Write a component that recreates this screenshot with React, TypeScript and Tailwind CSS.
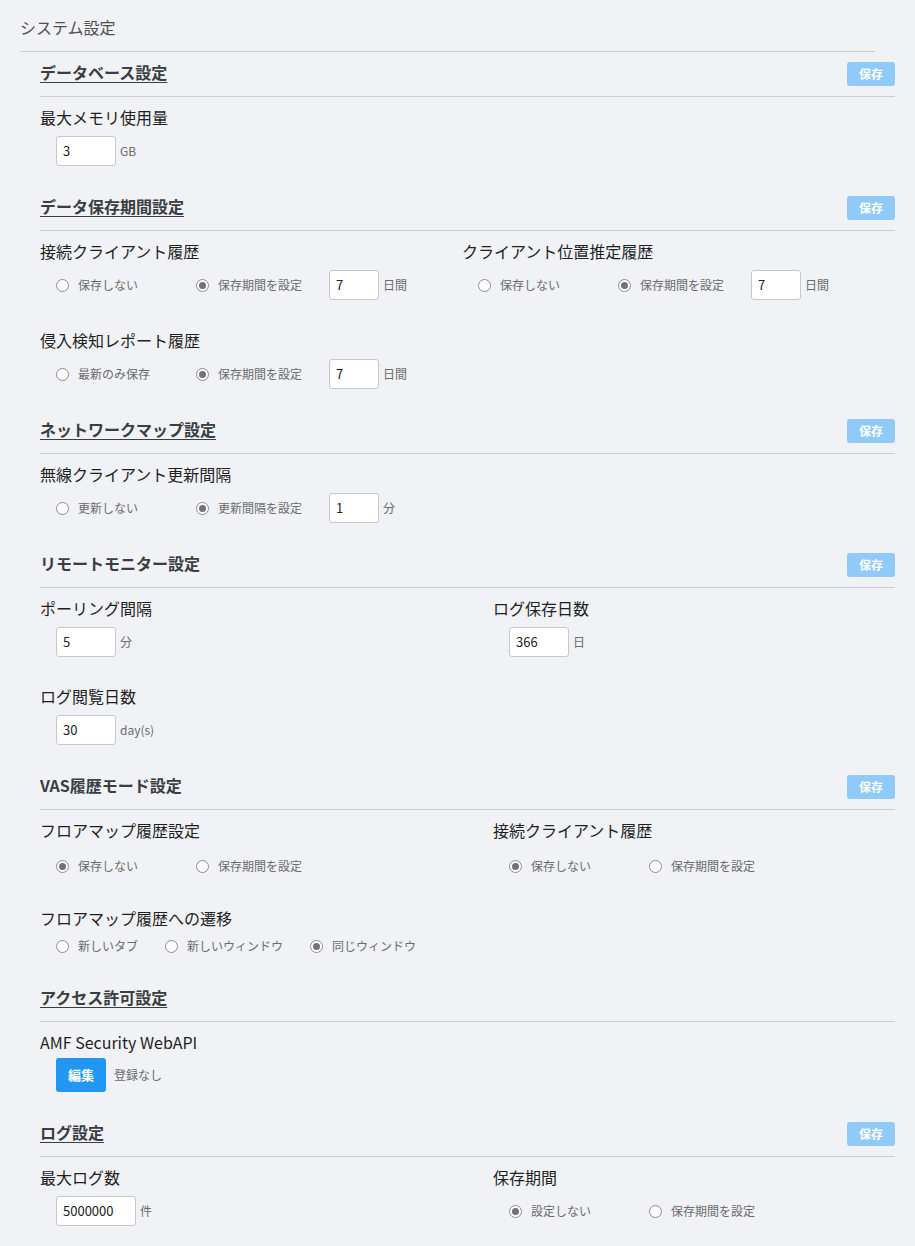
import React from 'react';

// 画面: システム設定

const SaveButton = () => (
  <button className="h-6 w-12 rounded-[3px] bg-[#90caf9] text-xs font-bold leading-6 text-white">保存</button>
);

const SectionHeader = ({ title, underline = true, save = true }: { title: string; underline?: boolean; save?: boolean }) => (
  <div className="flex h-[35px] items-start justify-between border-b border-[#cccccc]">
    <h2 className={`-mt-[2px] h-6 text-base font-bold leading-6 text-[#3a3d42] ${underline ? 'underline underline-offset-[3px]' : ''}`}>{title}</h2>
    {save && <SaveButton />}
  </div>
);

const Label = ({ children, className = '' }: { children: React.ReactNode; className?: string }) => (
  <div className={`h-6 text-base leading-[22px] text-[#1f1f1f] ${className}`}>{children}</div>
);

const Unit = ({ children }: { children: React.ReactNode }) => (
  <span className="ml-1 text-xs text-[#6b6b6b]">{children}</span>
);

const TextInput = ({ value, width }: { value: string; width: string }) => (
  <div className={`flex h-[30px] items-center rounded-[3px] border border-[#c8c8c8] bg-white pl-[6px] text-[13px] text-[#222] ${width}`}>
    {value}
  </div>
);

const Radio = ({ label, checked = false, className = '' }: { label: string; checked?: boolean; className?: string }) => (
  <label className={`flex items-center ${className}`}>
    <span className="flex h-[13px] w-[13px] shrink-0 items-center justify-center rounded-full border border-[#8c8c8c] bg-white">
      {checked && <span className="h-[7px] w-[7px] rounded-full bg-[#737373]" />}
    </span>
    <span className="ml-[9px] text-xs text-[#6b6b6b]">{label}</span>
  </label>
);

const PeriodRow = ({ off, on, value, unit, onChecked = true }: { off: string; on: string; value?: string; unit?: string; onChecked?: boolean }) => (
  <div className="ml-4 mt-[6px] flex h-[30px] items-center">
    <Radio label={off} checked={!onChecked} className="w-[140px]" />
    <Radio label={on} checked={onChecked} className="w-[133px]" />
    {value !== undefined && (
      <>
        <TextInput value={value} width="w-[50px]" />
        <Unit>{unit}</Unit>
      </>
    )}
  </div>
);

const InputRow = ({ value, width, unit }: { value: string; width: string; unit: string }) => (
  <div className="ml-4 mt-[6px] flex h-[30px] items-center">
    <TextInput value={value} width={width} />
    <Unit>{unit}</Unit>
  </div>
);

export default function App() {
  return (
    <div className="min-h-[1246px] bg-[#f0f2f6] pb-5 font-['Noto_Sans_CJK_JP','Noto_Sans',sans-serif]">
      <div className="ml-5 w-[855px] border-b border-[#cccccc] pb-[11px] pt-4">
        <h1 className="h-6 text-base leading-[22px] text-[#505050]">システム設定</h1>
      </div>

      <div className="ml-10 w-[855px]">
        {/* データベース */}
        <section className="mt-[10px]">
          <SectionHeader title="データベース設定" />
          <div className="pt-[9px]">
            <Label>最大メモリ使用量</Label>
            <InputRow value="3" width="w-[60px]" unit="GB" />
          </div>
        </section>

        {/* データ保存期間 */}
        <section className="mt-[30px]">
          <SectionHeader title="データ保存期間設定" />
          <div className="pt-[9px]">
            <div className="flex">
              <div className="w-[422px]">
                <Label>接続クライアント履歴</Label>
                <PeriodRow off="保存しない" on="保存期間を設定" value="7" unit="日間" />
              </div>
              <div>
                <Label>クライアント位置推定履歴</Label>
                <PeriodRow off="保存しない" on="保存期間を設定" value="7" unit="日間" />
              </div>
            </div>
            <Label className="mt-[29px]">侵入検知レポート履歴</Label>
            <PeriodRow off="最新のみ保存" on="保存期間を設定" value="7" unit="日間" />
          </div>
        </section>

        {/* ネットワークマップ */}
        <section className="mt-[30px]">
          <SectionHeader title="ネットワークマップ設定" />
          <div className="pt-[9px]">
            <Label>無線クライアント更新間隔</Label>
            <PeriodRow off="更新しない" on="更新間隔を設定" value="1" unit="分" />
          </div>
        </section>

        {/* リモートモニター */}
        <section className="mt-[30px]">
          <SectionHeader title="リモートモニター設定" underline={false} />
          <div className="pt-[9px]">
            <div className="flex">
              <div className="w-[453px]">
                <Label>ポーリング間隔</Label>
                <InputRow value="5" width="w-[60px]" unit="分" />
              </div>
              <div>
                <Label>ログ保存日数</Label>
                <InputRow value="366" width="w-[60px]" unit="日" />
              </div>
            </div>
            <Label className="mt-7">ログ閲覧日数</Label>
            <InputRow value="30" width="w-[60px]" unit="day(s)" />
          </div>
        </section>

        {/* VAS履歴モード */}
        <section className="mt-[30px]">
          <SectionHeader title="VAS履歴モード設定" underline={false} />
          <div className="pt-[9px]">
            <div className="flex">
              <div className="w-[453px]">
                <Label>フロアマップ履歴設定</Label>
                <div className="mt-2">
                  <PeriodRow off="保存しない" on="保存期間を設定" onChecked={false} />
                </div>
              </div>
              <div>
                <Label>接続クライアント履歴</Label>
                <div className="mt-2">
                  <PeriodRow off="保存しない" on="保存期間を設定" onChecked={false} />
                </div>
              </div>
            </div>
            <Label className="mt-[26px]">フロアマップ履歴への遷移</Label>
            <div className="ml-4 mt-1 flex h-[22px] items-center">
              <Radio label="新しいタブ" className="mr-[27px]" />
              <Radio label="新しいウィンドウ" className="mr-[27px]" />
              <Radio label="同じウィンドウ" checked />
            </div>
          </div>
        </section>

        {/* アクセス許可 */}
        <section className="mt-[30px]">
          <SectionHeader title="アクセス許可設定" save={false} />
          <div className="pt-[9px]">
            <Label>AMF Security WebAPI</Label>
            <div className="ml-4 mt-[3px] flex h-[34px] items-center">
              <button className="h-[34px] w-[50px] rounded-[3px] bg-[#2196f3] text-[13px] font-bold text-white">編集</button>
              <span className="ml-2 text-xs text-[#6b6b6b]">登録なし</span>
            </div>
          </div>
        </section>

        {/* ログ */}
        <section className="mt-[30px]">
          <SectionHeader title="ログ設定" />
          <div className="pt-[9px]">
            <div className="flex">
              <div className="w-[453px]">
                <Label>最大ログ数</Label>
                <InputRow value="5000000" width="w-[80px]" unit="件" />
              </div>
              <div>
                <Label>保存期間</Label>
                <div className="mt-[2px]">
                  <PeriodRow off="設定しない" on="保存期間を設定" onChecked={false} />
                </div>
              </div>
            </div>
          </div>
        </section>
      </div>
    </div>
  );
}
